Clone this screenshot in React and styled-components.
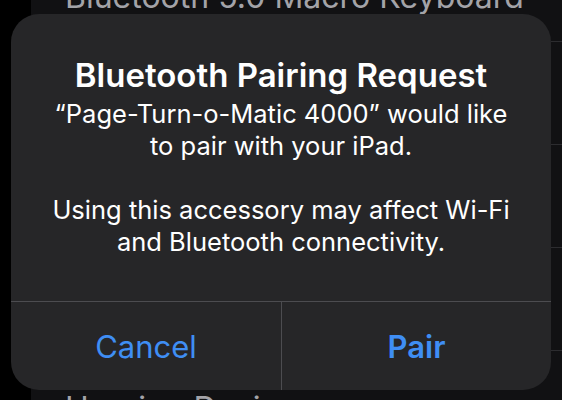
import styled, { createGlobalStyle } from "styled-components";

const GlobalStyle = createGlobalStyle`
  html, body {
    margin: 0;
    padding: 0;
    background: #000;
  }
  body {
    font-family: Inter, "Noto Sans", "Liberation Sans", sans-serif;
    -webkit-font-smoothing: antialiased;
  }
`;

const Screen = styled.div`
  position: relative;
  width: 562px;
  height: 400px;
  overflow: hidden;
  background: #000;
  display: flex;
`;

const List = styled.div`
  flex: 1;
  margin-left: 31px;
  background: #111113;
  display: flex;
  flex-direction: column;
  margin-top: -61px;
`;

const Row = styled.div`
  flex-shrink: 0;
  height: 103px;
  display: flex;
  align-items: ${(p) => (p.$end ? "flex-end" : "center")};
  padding: ${(p) => (p.$end ? "0 0 24px 34px" : "14px 0 0 34px")};
  box-sizing: border-box;
  border-bottom: 1px solid #2c2c2f;
  color: #a3a3a8;
  font-size: 32px;
  line-height: 40px;
  white-space: nowrap;
`;

const Dialog = styled.div`
  position: absolute;
  left: 11px;
  top: 14px;
  width: 540px;
  height: 376px;
  border-radius: 28px;
  background: #262628;
  display: flex;
  flex-direction: column;
  overflow: hidden;
  color: #fff;
`;

const Body = styled.div`
  flex: 1;
  padding: 41px 16px 0;
  text-align: center;
`;

const Title = styled.h2`
  margin: 0 0 3px;
  font-size: 33px;
  line-height: 40px;
  font-weight: 600;
`;

const Message = styled.p`
  margin: 0 0 32px;
  font-size: 25.5px;
  line-height: 32px;
  font-weight: 400;
`;

const Actions = styled.div`
  height: 88px;
  border-top: 1px solid #4c4c50;
  display: grid;
  grid-template-columns: 1fr 1fr;
`;

const ActionButton = styled.button`
  border: none;
  background: transparent;
  margin: 0;
  padding: 0;
  font-family: inherit;
  font-size: 31px;
  font-weight: ${(p) => (p.$primary ? 600 : 400)};
  color: #3f8ef4;
  cursor: pointer;
  & + & {
    border-left: 1px solid #4c4c50;
  }
`;

export default function App() {
  return (
    <>
      <GlobalStyle />
      <Screen>
        <List>
          <Row $end>Bluetooth 5.0 Macro Keyboard</Row>
          <Row>Magic Trackpad</Row>
          <Row>AirPods Pro</Row>
          <Row>Apple Pencil</Row>
          <Row>Hearing Devices</Row>
        </List>
        <Dialog>
          <Body>
            <Title>Bluetooth Pairing Request</Title>
            <Message>
              “Page-Turn-o-Matic 4000” would like
              <br />
              to pair with your iPad.
            </Message>
            <Message>
              Using this accessory may affect Wi-Fi
              <br />
              and Bluetooth connectivity.
            </Message>
          </Body>
          <Actions>
            <ActionButton>Cancel</ActionButton>
            <ActionButton $primary>Pair</ActionButton>
          </Actions>
        </Dialog>
      </Screen>
    </>
  );
}
